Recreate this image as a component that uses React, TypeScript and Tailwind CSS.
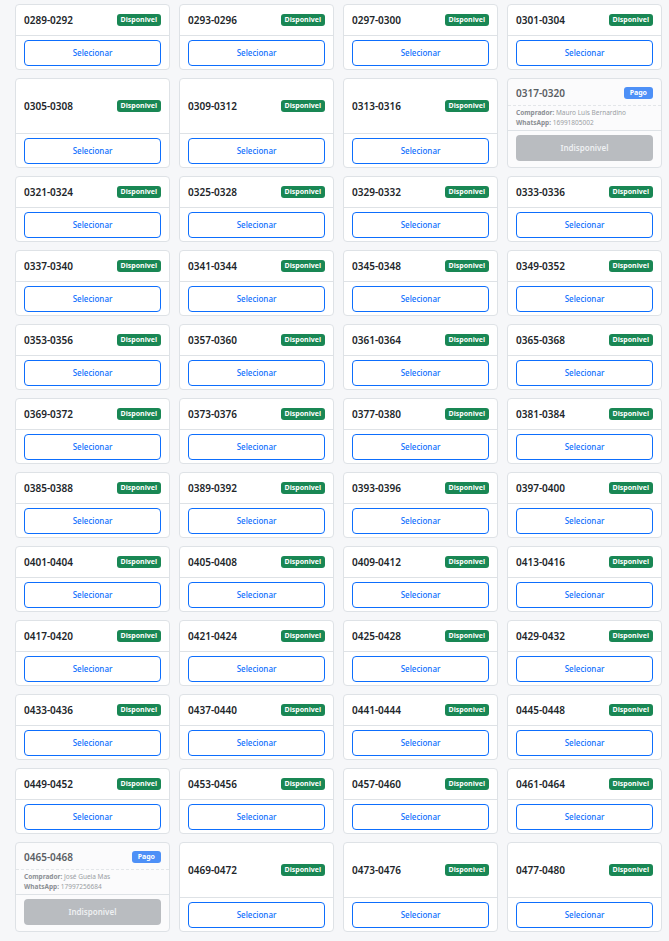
import React from "react";

type Ticket = {
  start: number;
  buyer?: string;
  phone?: string;
};

const paid: Record<number, { buyer: string; phone: string }> = {
  317: { buyer: "Mauro Luis Bernardino", phone: "16991805002" },
  465: { buyer: "José Gueia Mas", phone: "17997256684" },
};

const tickets: Ticket[] = Array.from({ length: 48 }, (_, i) => {
  const start = 289 + i * 4;
  return { start, ...paid[start] };
});

const pad = (n: number) => String(n).padStart(4, "0");

function TicketCard({ ticket }: { ticket: Ticket }) {
  const label = `${pad(ticket.start)}-${pad(ticket.start + 3)}`;

  if (ticket.buyer) {
    return (
      <div className="flex flex-col rounded-[4px] border border-[#dee2e6] bg-[#fbfbfc]">
        <div className="flex h-[27px] items-center justify-between border-b border-dashed border-[#e3e6e9] px-2 pt-[2px]">
          <span className="text-[10px] font-semibold text-[#5a5e63]">{label}</span>
          <span className="rounded-[3px] bg-[#4d90f7] px-[6px] py-[1px] text-[7px] font-bold leading-[10px] text-white">
            Pago
          </span>
        </div>
        <div className="flex flex-col gap-[1px] px-2 pt-[2px] pb-[3px] text-[6.5px] leading-[9px] text-[#9a9ea3]">
          <div>
            <span className="font-bold text-[#8b8f94]">Comprador:</span> {ticket.buyer}
          </div>
          <div>
            <span className="font-bold text-[#8b8f94]">WhatsApp:</span> {ticket.phone}
          </div>
        </div>
        <div className="border-t border-[#dee2e6] px-2 pt-[4px] pb-[6px]">
          <div className="flex h-[26px] items-center justify-center rounded-[4px] bg-[#b9bcc0] text-[8px] font-semibold text-[#eef0f2]">
            Indisponivel
          </div>
        </div>
      </div>
    );
  }

  return (
    <div className="flex flex-col rounded-[4px] border border-[#dee2e6] bg-white">
      <div className="flex min-h-[30px] flex-1 items-center justify-between px-2">
        <span className="text-[10px] font-semibold text-[#212529]">{label}</span>
        <span className="rounded-[3px] bg-[#198754] px-[4px] py-[1px] text-[7px] font-bold leading-[10px] text-white">
          Disponivel
        </span>
      </div>
      <div className="border-t border-[#dee2e6] px-2 pt-[4px] pb-[3px]">
        <button className="flex h-[26px] w-full items-center justify-center rounded-[4px] border border-[#0d6efd] bg-white text-[8px] font-medium text-[#0d6efd]">
          Selecionar
        </button>
      </div>
    </div>
  );
}

export default function App() {
  return (
    <div
      className="min-h-[941px] bg-[#f6f7f9] pt-1 pr-[7px] pb-2 pl-[15px]"
      style={{ fontFamily: '"Noto Sans", "Open Sans", sans-serif' }}
    >
      <div className="grid grid-cols-4 gap-x-[9px] gap-y-2">
        {tickets.map((t) => (
          <TicketCard key={t.start} ticket={t} />
        ))}
      </div>
    </div>
  );
}
